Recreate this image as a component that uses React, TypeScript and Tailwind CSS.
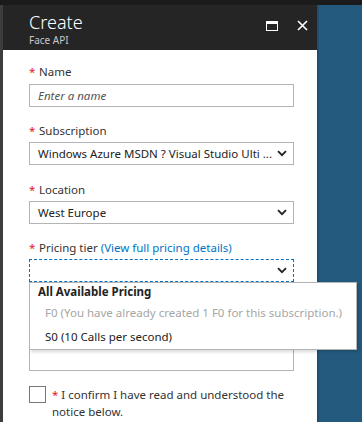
const Chevron = () => (
  <svg width="10" height="7" viewBox="0 0 10 7" className="shrink-0">
    <path d="M1 1.2 L5 5.2 L9 1.2" fill="none" stroke="#222" strokeWidth="1.8" />
  </svg>
);

const Label = ({ children }: { children: React.ReactNode }) => (
  <div className="flex h-[18px] items-center text-[11.5px] text-[#333]">
    <span className="w-[10px] text-[#e81123]">*</span>
    <span>{children}</span>
  </div>
);

const Select = ({ value, focused }: { value: string; focused?: boolean }) => (
  <div
    className={
      focused
        ? "flex h-[23px] w-[265px] items-center justify-between border border-dashed border-[#0072c6] pl-[8px] pr-[6px]"
        : "flex h-[23px] w-[265px] items-center justify-between border border-[#b4b4b4] pl-[8px] pr-[6px]"
    }
  >
    <span className="whitespace-nowrap text-[11.5px] text-[#222]">{value}</span>
    <Chevron />
  </div>
);

export default function App() {
  return (
    <div className="flex h-[422px] w-[362px] flex-col overflow-hidden bg-[#1b1b1b] font-['Noto_Sans',sans-serif]">
      <div className="h-[5px]" />
      <div className="flex flex-1">
        <div className="w-[3px] bg-[#3d3d3d]" />
        <div className="flex w-[314px] flex-col">
          <header className="flex h-[45px] items-start justify-between bg-[#252525] pl-[26px] pr-[9px]">
            <div className="pt-[6px]">
              <div className="text-[18px] font-light leading-[22px] text-white">Create</div>
              <div className="text-[10px] leading-[14px] text-[#c8c8c8]">Face API</div>
            </div>
            <div className="flex items-center gap-[19px] pt-[15px]">
              <svg width="12" height="10" viewBox="0 0 12 10">
                <rect x="0.5" y="0.5" width="11" height="9" fill="none" stroke="#fff" />
                <rect x="0" y="0" width="12" height="3" fill="#fff" />
              </svg>
              <svg width="11" height="11" viewBox="0 0 11 11">
                <path d="M1 1 L10 10 M10 1 L1 10" stroke="#fff" strokeWidth="1.6" />
              </svg>
            </div>
          </header>
          <div className="flex flex-1 flex-col bg-white pl-[26px] pt-[13px]">
            <Label>Name</Label>
            <div className="mt-[3px] flex h-[23px] w-[265px] items-center border border-[#b4b4b4] pl-[8px]">
              <span className="text-[11.5px] italic text-[#555]">Enter a name</span>
            </div>

            <div className="mt-[15px]">
              <Label>Subscription</Label>
            </div>
            <div className="mt-[2px]">
              <Select value="Windows Azure MSDN ? Visual Studio Ulti ..." />
            </div>

            <div className="mt-[16px]">
              <Label>Location</Label>
            </div>
            <div className="mt-[2px]">
              <Select value="West Europe" />
            </div>

            <div className="mt-[15px]">
              <Label>
                Pricing tier <span className="text-[#0072c6]">(View full pricing details)</span>
              </Label>
            </div>
            <div className="relative mt-[2px]">
              <Select value="" focused />
              <div className="absolute left-0 top-[23px] z-10 flex h-[68px] w-[328px] flex-col border border-[#b4b4b4] bg-white text-[11.5px] shadow-[2px_2px_3px_rgba(0,0,0,0.15)]">
                <div className="pl-[8px] font-bold leading-[18px] text-[#222]">All Available Pricing</div>
                <div className="pl-[15px] leading-[24px] text-[#a6a6a6]">F0 (You have already created 1 F0 for this subscription.)</div>
                <div className="pl-[15px] leading-[24px] text-[#222]">S0 (10 Calls per second)</div>
              </div>
            </div>
            <div className="mt-[15px] h-[74px] w-[265px] border border-[#b4b4b4]" />

            <div className="mt-[15px] flex items-start gap-[6px]">
              <div className="h-[17px] w-[17px] shrink-0 border border-[#777]" />
              <p className="w-[250px] text-[11.5px] leading-[17px] text-[#333]">
                <span className="text-[#e81123]">*</span> I confirm I have read and understood the notice below.
              </p>
            </div>
          </div>
        </div>
        <div className="flex-1 border-l-2 border-[#1f4f70] bg-[#245a7e]" />
      </div>
    </div>
  );
}
